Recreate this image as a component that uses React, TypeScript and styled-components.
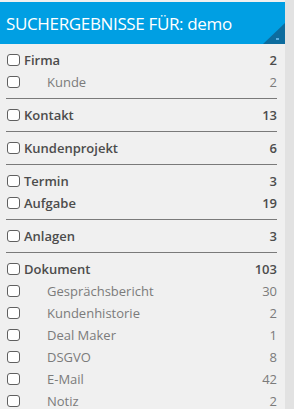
import React from "react";
import styled, { createGlobalStyle } from "styled-components";

const Global = createGlobalStyle`
  html, body { margin: 0; padding: 0; background: #f0f0f0; }
  body { font-family: "Open Sans", "Noto Sans", sans-serif; }
`;

const Screen = styled.div`
  display: flex;
  height: 409px;
  overflow: hidden;
  background: #f0f0f0;
`;

const Panel = styled.div`
  flex: 1;
  padding-top: 2px;
  min-width: 0;
`;

const Header = styled.div`
  position: relative;
  height: 42px;
  background: #009fe3;
  color: #ffffff;
  display: flex;
  align-items: center;
  padding-left: 6px;
  font-size: 17px;
  letter-spacing: -0.35px;
`;

const Corner = styled.svg`
  position: absolute;
  right: 0;
  bottom: 0;
`;

const List = styled.div`
  padding: 0 8px 0 6px;
`;

const Group = styled.div`
  padding: 5px 0;
  border-bottom: 1px solid #7a7a7a;
`;

const Row = styled.label<{ $sub?: boolean }>`
  height: 22px;
  display: flex;
  align-items: center;
  font-size: 13px;
  color: ${(p) => (p.$sub ? "#7b7b7b" : "#4c4c4c")};
  font-weight: ${(p) => (p.$sub ? 400 : 600)};
`;

const Box = styled.input.attrs({ type: "checkbox" })`
  appearance: none;
  -webkit-appearance: none;
  box-sizing: border-box;
  margin: 0 0 0 1px;
  width: 13px;
  height: 12px;
  border: 1px solid #606060;
  border-radius: 3px;
  background: #ffffff;
  flex: none;
`;

const Label = styled.span<{ $sub?: boolean }>`
  flex: 1;
  padding-left: ${(p) => (p.$sub ? "27px" : "4px")};
  white-space: nowrap;
`;

const Count = styled.span`
  text-align: right;
`;

const Scroll = styled.div`
  width: 9px;
  flex: none;
  background: #e2e2e2;
`;

type Item = { label: string; count: number; sub?: boolean };

const groups: Item[][] = [
  [
    { label: "Firma", count: 2 },
    { label: "Kunde", count: 2, sub: true },
  ],
  [{ label: "Kontakt", count: 13 }],
  [{ label: "Kundenprojekt", count: 6 }],
  [
    { label: "Termin", count: 3 },
    { label: "Aufgabe", count: 19 },
  ],
  [{ label: "Anlagen", count: 3 }],
  [
    { label: "Dokument", count: 103 },
    { label: "Gesprächsbericht", count: 30, sub: true },
    { label: "Kundenhistorie", count: 2, sub: true },
    { label: "Deal Maker", count: 1, sub: true },
    { label: "DSGVO", count: 8, sub: true },
    { label: "E-Mail", count: 42, sub: true },
    { label: "Notiz", count: 2, sub: true },
  ],
];

export default function App() {
  return (
    <>
      <Global />
      <Screen>
        <Panel>
          <Header>
            SUCHERGEBNISSE FÜR: demo
            <Corner width="22" height="21" viewBox="0 0 22 21">
              <polygon points="22,0 22,21 0,21" fill="#0d6c9e" />
              <rect x="13" y="15" width="3" height="2" fill="#5aaee0" />
            </Corner>
          </Header>
          <List>
            {groups.map((g, i) => (
              <Group key={i}>
                {g.map((it) => (
                  <Row key={it.label} $sub={it.sub}>
                    <Box />
                    <Label $sub={it.sub}>{it.label}</Label>
                    <Count>{it.count}</Count>
                  </Row>
                ))}
              </Group>
            ))}
          </List>
        </Panel>
        <Scroll />
      </Screen>
    </>
  );
}
